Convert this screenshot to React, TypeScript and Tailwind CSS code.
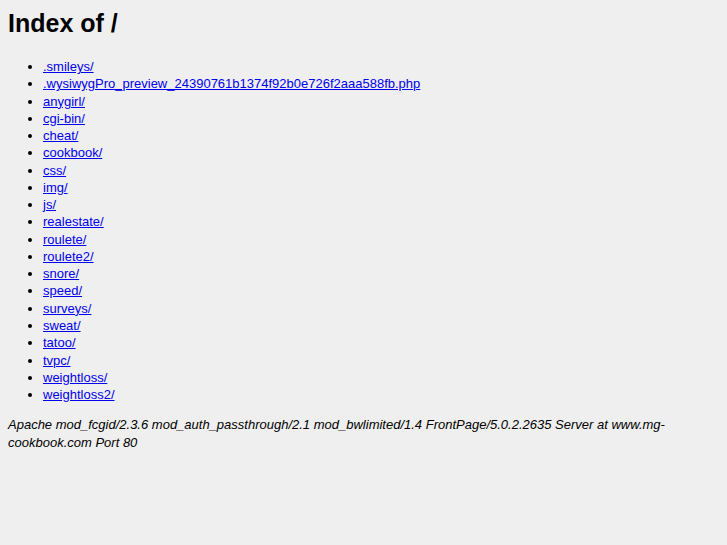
const dirs = [
  ".smileys/",
  ".wysiwygPro_preview_24390761b1374f92b0e726f2aaa588fb.php",
  "anygirl/",
  "cgi-bin/",
  "cheat/",
  "cookbook/",
  "css/",
  "img/",
  "js/",
  "realestate/",
  "roulete/",
  "roulete2/",
  "snore/",
  "speed/",
  "surveys/",
  "sweat/",
  "tatoo/",
  "tvpc/",
  "weightloss/",
  "weightloss2/",
];

export default function App() {
  return (
    <div
      className="min-h-[545px] w-full bg-[#efefef] px-2 pt-[8px] text-black"
      style={{ fontFamily: '"Liberation Sans", Arial, sans-serif' }}
    >
      <h1 className="text-[25px] font-bold leading-[30px]">Index of /</h1>
      <ul className="mt-[20px] list-disc pl-[35px] text-[13px] leading-[17.26px]">
        {dirs.map((d) => (
          <li key={d}>
            <a href="#" className="text-[#0000ee] underline">
              {d}
            </a>
          </li>
        ))}
      </ul>
      <address className="mt-[13px] text-[13px] italic leading-[18px]">
        Apache mod_fcgid/2.3.6 mod_auth_passthrough/2.1 mod_bwlimited/1.4 FrontPage/5.0.2.2635 Server at www.mg-cookbook.com Port 80
      </address>
    </div>
  );
}
